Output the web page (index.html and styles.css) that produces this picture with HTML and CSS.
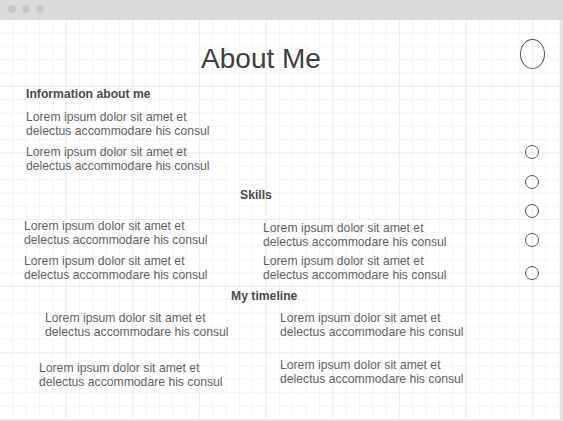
FILE: index.html
```html
<!DOCTYPE html>
<html lang="en">
<head>
<meta charset="utf-8">
<title>About Me</title>
<link rel="stylesheet" href="styles.css">
</head>
<body>
<div class="window">
  <div class="titlebar">
    <span class="dot"></span><span class="dot"></span><span class="dot"></span>
  </div>
  <div class="canvas">
    <main class="content">
      <h1 class="title">About Me</h1>

      <section class="info">
        <h2 class="label">Information about me</h2>
        <p class="text first">Lorem ipsum dolor sit amet et<br>delectus accommodare his consul</p>
        <p class="text second">Lorem ipsum dolor sit amet et<br>delectus accommodare his consul</p>
      </section>

      <section class="skills">
        <h2 class="label skills-label">Skills</h2>
        <div class="skills-grid">
          <p class="text">Lorem ipsum dolor sit amet et<br>delectus accommodare his consul</p>
          <p class="text nudge">Lorem ipsum dolor sit amet et<br>delectus accommodare his consul</p>
          <p class="text">Lorem ipsum dolor sit amet et<br>delectus accommodare his consul</p>
          <p class="text">Lorem ipsum dolor sit amet et<br>delectus accommodare his consul</p>
        </div>
      </section>

      <section class="timeline">
        <h2 class="label timeline-label">My timeline</h2>
        <div class="timeline-grid">
          <p class="text indent">Lorem ipsum dolor sit amet et<br>delectus accommodare his consul</p>
          <p class="text">Lorem ipsum dolor sit amet et<br>delectus accommodare his consul</p>
          <p class="text lower">Lorem ipsum dolor sit amet et<br>delectus accommodare his consul</p>
          <p class="text">Lorem ipsum dolor sit amet et<br>delectus accommodare his consul</p>
        </div>
      </section>
    </main>

    <aside class="rail">
      <span class="avatar"></span>
      <span class="ring r1"></span>
      <span class="ring r2"></span>
      <span class="ring"></span>
      <span class="ring"></span>
      <span class="ring r5"></span>
    </aside>
  </div>
</div>
</body>
</html>
```

FILE: styles.css
```css
* {
  box-sizing: border-box;
}

html, body {
  margin: 0;
  padding: 0;
  background: #ffffff;
}

body {
  font-family: "Liberation Sans", Arial, sans-serif;
  color: #626262;
}

.window {
  width: 563px;
  height: 421px;
  display: flex;
  flex-direction: column;
  overflow: hidden;
}

.titlebar {
  height: 20px;
  flex: none;
  background: #dadada;
  display: flex;
  align-items: flex-start;
  gap: 6px;
  padding: 5px 0 0 8px;
}

.dot {
  width: 8px;
  height: 8px;
  border-radius: 50%;
  background: #c7c7c7;
}

.canvas {
  flex: 1;
  display: flex;
  border-right: 3px solid #e4e4e4;
  border-bottom: 2px solid #e4e4e4;
  background-color: #ffffff;
  background-image:
    linear-gradient(to right, transparent calc(100% - 1px), #ececec calc(100% - 1px)),
    linear-gradient(to bottom, transparent calc(100% - 1px), #ececec calc(100% - 1px)),
    linear-gradient(to right, transparent calc(100% - 1px), #f4f4f4 calc(100% - 1px)),
    linear-gradient(to bottom, transparent calc(100% - 1px), #f4f4f4 calc(100% - 1px));
  background-size:
    66.667px 66.667px,
    66.667px 66.667px,
    13.333px 13.333px,
    13.333px 13.333px;
}

.content {
  width: 519px;
  flex: none;
  padding-top: 23px;
}

.title {
  margin: 0;
  padding-left: 3px;
  text-align: center;
  font-size: 28px;
  line-height: 32px;
  font-weight: normal;
  color: #404040;
}

.label {
  margin: 0;
  font-size: 12.2px;
  line-height: 14px;
  font-weight: bold;
  color: #4a4a4a;
}

.text {
  margin: 0;
  font-size: 12.2px;
  line-height: 14px;
  white-space: nowrap;
}

.info {
  margin-top: 12px;
  padding-left: 26px;
}

.info .first {
  margin-top: 9px;
}

.info .second {
  margin-top: 7px;
}

.skills {
  margin-top: 15px;
}

.skills-label {
  padding-left: 240px;
}

.skills-grid {
  margin-top: 17px;
  padding-left: 24px;
  display: grid;
  grid-template-columns: 239px 1fr;
  row-gap: 7px;
}

.skills-grid .nudge {
  margin-top: 2px;
  margin-bottom: -2px;
}

.timeline {
  margin-top: 7px;
}

.timeline-label {
  padding-left: 231px;
}

.timeline-grid {
  margin-top: 8px;
  padding-left: 39px;
  display: grid;
  grid-template-columns: 241px 1fr;
  row-gap: 19px;
  align-items: start;
}

.timeline-grid .indent {
  padding-left: 6px;
}

.timeline-grid .lower {
  margin-top: 3px;
}

.rail {
  width: 26px;
  flex: none;
  display: flex;
  flex-direction: column;
  align-items: center;
  padding-top: 19px;
  gap: 15px;
}

.avatar {
  width: 25px;
  height: 30px;
  border: 1.3px solid #555555;
  border-radius: 50%;
  margin-bottom: 61px;
}

.ring {
  width: 14px;
  height: 14px;
  border: 1px solid #555555;
  border-radius: 50%;
}

.ring.r2 {
  margin-top: 1px;
}

.ring.r5 {
  margin-top: 4px;
}
```
